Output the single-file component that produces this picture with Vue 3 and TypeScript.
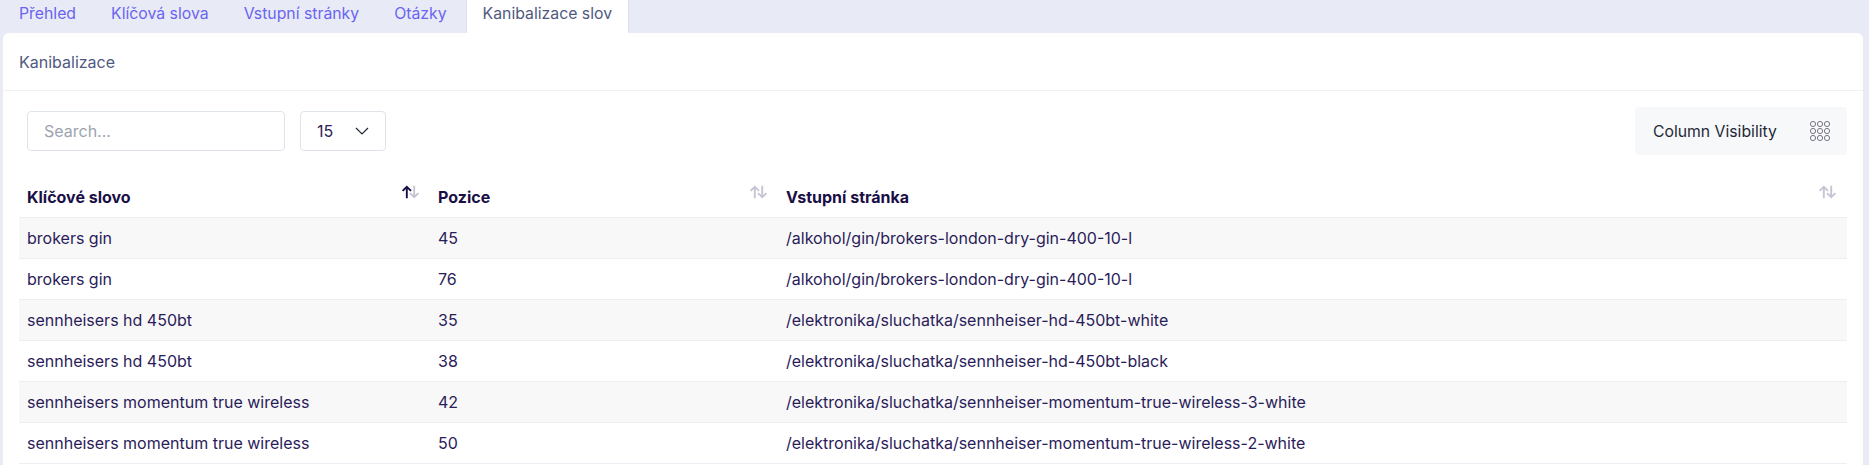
<script setup lang="ts">
const tabs = ['Přehled', 'Klíčová slova', 'Vstupní stránky', 'Otázky', 'Kanibalizace slov']
const rows = [
  ['brokers gin', '45', '/alkohol/gin/brokers-london-dry-gin-400-10-l'],
  ['brokers gin', '76', '/alkohol/gin/brokers-london-dry-gin-400-10-l'],
  ['sennheisers hd 450bt', '35', '/elektronika/sluchatka/sennheiser-hd-450bt-white'],
  ['sennheisers hd 450bt', '38', '/elektronika/sluchatka/sennheiser-hd-450bt-black'],
  ['sennheisers momentum true wireless', '42', '/elektronika/sluchatka/sennheiser-momentum-true-wireless-3-white'],
  ['sennheisers momentum true wireless', '50', '/elektronika/sluchatka/sennheiser-momentum-true-wireless-2-white'],
]
const heads = ['Klíčové slovo', 'Pozice', 'Vstupní stránka']
const dots = [0, 1, 2, 3, 4, 5, 6, 7, 8]
</script>

<template>
  <div class="page">
    <nav class="tabs">
      <a v-for="(t, i) in tabs" :key="t" class="tab" :class="{ active: i === 4 }">{{ t }}</a>
    </nav>
    <section class="card">
      <header class="card-head">Kanibalizace</header>
      <div class="card-body">
        <div class="toolbar">
          <div class="filters">
            <div class="search">Search...</div>
            <div class="select">
              <span>15</span>
              <svg width="14" height="8" viewBox="0 0 14 8" fill="none"><path d="M1 1l6 6 6-6" stroke="#1f2937" stroke-width="1.2" /></svg>
            </div>
          </div>
          <button class="colvis">
            <span>Column Visibility</span>
            <svg width="20" height="20" viewBox="0 0 20 20" fill="none" stroke="#7a7488" stroke-width="1">
              <circle v-for="d in dots" :key="d" :cx="3 + (d % 3) * 7" :cy="3 + Math.floor(d / 3) * 7" r="2.6" />
            </svg>
          </button>
        </div>
        <table class="table">
          <colgroup>
            <col class="c1" /><col class="c2" /><col />
          </colgroup>
          <thead>
            <tr>
              <th v-for="(h, i) in heads" :key="h">
                {{ h }}
                <svg class="sort" width="19" height="14" viewBox="0 0 18 13" fill="none" stroke-width="1.8">
                  <path d="M5.5 12.5V1.5M1.5 5.5l4-4 4 4" :stroke="i === 0 ? '#1a0f45' : '#c5c5d6'" />
                  <path d="M12.5 .5v11M8.5 7.5l4 4 4-4" stroke="#c5c5d6" />
                </svg>
              </th>
            </tr>
          </thead>
          <tbody>
            <tr v-for="(r, i) in rows" :key="i">
              <td v-for="(c, j) in r" :key="j">{{ c }}</td>
            </tr>
          </tbody>
        </table>
      </div>
    </section>
  </div>
</template>

<style>
body { margin: 0; background: #e8ebf6; }
</style>

<style scoped>
.page {
  height: 465px;
  overflow: hidden;
  background: #e8ebf6;
  font-family: Inter, "Liberation Sans", sans-serif;
  font-size: 16px;
  color: #2a1c5a;
  box-sizing: border-box;
}
.tabs {
  display: flex;
  height: 33px;
  padding-left: 3px;
  gap: 3px;
}
.tab {
  padding: 0 16px;
  font-size: 15.8px;
  line-height: 27px;
  color: #6a64f1;
  white-space: nowrap;
}
.tab.active {
  background: #fff;
  color: #4f5a80;
  border: 1px solid #dde1ee;
  border-top: 0;
  border-bottom: 0;
}
.card {
  margin: 0 6px 0 3px;
  background: #fff;
  border-radius: 6px 6px 0 0;
  height: 432px;
}
.card-head {
  height: 58px;
  box-sizing: border-box;
  padding-left: 16px;
  line-height: 58px;
  color: #4f5a80;
  border-bottom: 1px solid #eff1f6;
}
.card-body {
  padding: 16px 16px 0;
}
.toolbar {
  display: flex;
  justify-content: space-between;
  align-items: center;
  height: 48px;
  padding-left: 8px;
}
.filters {
  display: flex;
  gap: 15px;
}
.search {
  width: 258px;
  height: 40px;
  box-sizing: border-box;
  border: 1px solid #dfe3ea;
  border-radius: 4px;
  padding-left: 16px;
  line-height: 38px;
  color: #9ca3af;
}
.select {
  width: 86px;
  height: 40px;
  box-sizing: border-box;
  border: 1px solid #dfe3ea;
  border-radius: 4px;
  padding: 0 16px;
  display: flex;
  align-items: center;
  justify-content: space-between;
}
.colvis {
  width: 212px;
  height: 48px;
  display: flex;
  align-items: center;
  justify-content: space-between;
  padding: 0 17px 0 18px;
  box-sizing: border-box;
  border: 0;
  border-radius: 4px;
  background: #f7f8fa;
  color: #1f2937;
  font: inherit;
  font-size: 15.75px;
}
.table {
  width: 100%;
  table-layout: fixed;
  border-collapse: collapse;
}
.c1 { width: 411px; }
.c2 { width: 348px; }
th {
  position: relative;
  height: 62px;
  box-sizing: border-box;
  padding: 0 8px 10px;
  vertical-align: bottom;
  text-align: left;
  font-weight: 700;
  color: #1a0f45;
  border-bottom: 1px solid #eceef3;
}
.sort {
  position: absolute;
  right: 10px;
  top: 30px;
}
td {
  height: 41px;
  box-sizing: border-box;
  padding: 0 8px;
  border-bottom: 1px solid #eceef3;
}
tbody tr:nth-child(odd) td { background: #f8f8f8; }
</style>
